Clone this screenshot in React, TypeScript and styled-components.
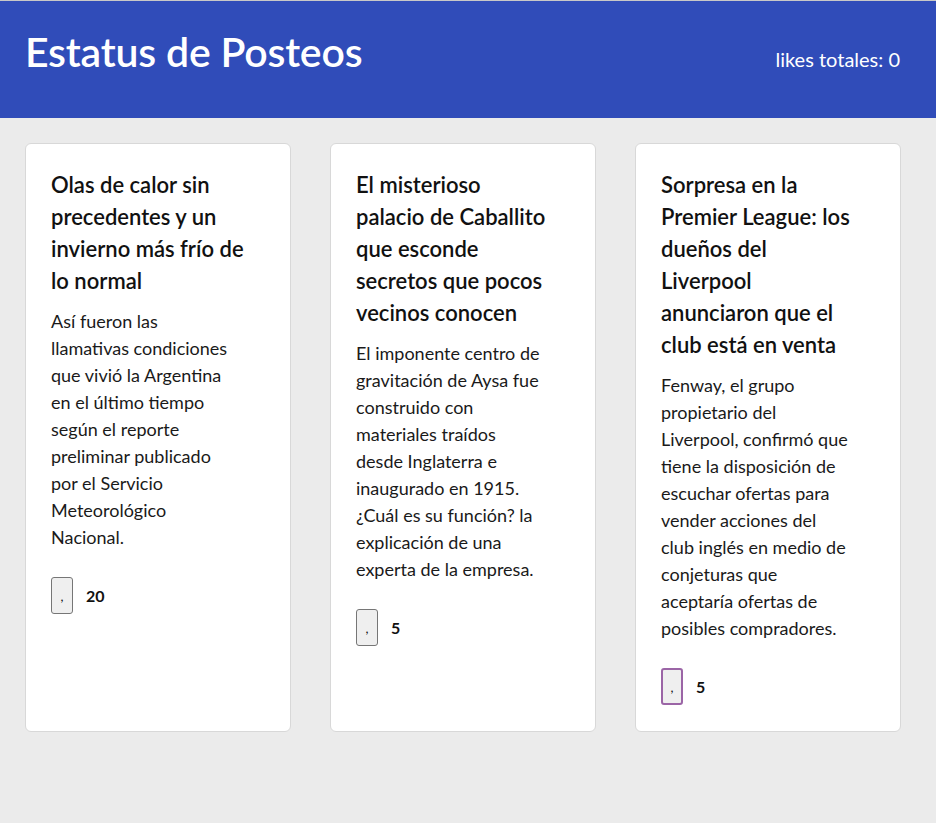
import { FC } from 'react'
import styled, { createGlobalStyle } from 'styled-components'

const GlobalStyle = createGlobalStyle`
  html, body {
    margin: 0;
    padding: 0;
    background: #ebebeb;
    font-family: Lato, 'Noto Sans', sans-serif;
  }
`

type Post = {
  id: number
  title: string[]
  body: string[]
  likes: number
  focused?: boolean
}

const posts: Post[] = [
  {
    id: 1,
    title: ['Olas de calor sin', 'precedentes y un', 'invierno más frío de', 'lo normal'],
    body: [
      'Así fueron las',
      'llamativas condiciones',
      'que vivió la Argentina',
      'en el último tiempo',
      'según el reporte',
      'preliminar publicado',
      'por el Servicio',
      'Meteorológico',
      'Nacional.',
    ],
    likes: 20,
  },
  {
    id: 2,
    title: ['El misterioso', 'palacio de Caballito', 'que esconde', 'secretos que pocos', 'vecinos conocen'],
    body: [
      'El imponente centro de',
      'gravitación de Aysa fue',
      'construido con',
      'materiales traídos',
      'desde Inglaterra e',
      'inaugurado en 1915.',
      '¿Cuál es su función? la',
      'explicación de una',
      'experta de la empresa.',
    ],
    likes: 5,
  },
  {
    id: 3,
    title: [
      'Sorpresa en la',
      'Premier League: los',
      'dueños del',
      'Liverpool',
      'anunciaron que el',
      'club está en venta',
    ],
    body: [
      'Fenway, el grupo',
      'propietario del',
      'Liverpool, confirmó que',
      'tiene la disposición de',
      'escuchar ofertas para',
      'vender acciones del',
      'club inglés en medio de',
      'conjeturas que',
      'aceptaría ofertas de',
      'posibles compradores.',
    ],
    likes: 5,
    focused: true,
  },
]

const Lines: FC<{ lines: string[] }> = ({ lines }) => (
  <>
    {lines.map((line, i) => (
      <span key={i}>
        {line}
        {i < lines.length - 1 && <br />}
      </span>
    ))}
  </>
)

const App = () => {
  const total = 0

  return (
    <>
      <GlobalStyle />
      <Header>
        <Title>Estatus de Posteos</Title>
        <Total>likes totales: {total}</Total>
      </Header>
      <Grid>
        {posts.map((post) => (
          <Card key={post.id}>
            <CardTitle>
              <Lines lines={post.title} />
            </CardTitle>
            <CardBody>
              <Lines lines={post.body} />
            </CardBody>
            <LikeRow>
              <LikeButton $focused={post.focused}>,</LikeButton>
              <LikeCount>{post.likes}</LikeCount>
            </LikeRow>
          </Card>
        ))}
      </Grid>
    </>
  )
}

const Header = styled.header`
  height: 118px;
  box-sizing: border-box;
  border-top: 1px solid #c8c8c8;
  background: #304cb9;
  color: #fff;
  display: flex;
  align-items: center;
  justify-content: space-between;
  padding: 0 36px 16px 25px;
`

const Title = styled.h1`
  margin: 0;
  font-size: 41px;
  font-weight: 600;
  letter-spacing: -0.2px;
`

const Total = styled.span`
  font-size: 20px;
  font-weight: 400;
  color: #fff;
  margin-top: 14px;
`

const Grid = styled.main`
  display: grid;
  grid-template-columns: repeat(3, 266px);
  column-gap: 39px;
  padding: 25px 0 26px 25px;
`

const Card = styled.article`
  background: #fff;
  border: 1px solid #d8d8d8;
  border-radius: 6px;
  padding: 25px 25px 26px;
  box-sizing: border-box;
  display: flex;
  flex-direction: column;
  align-items: flex-start;
`

const CardTitle = styled.h2`
  margin: 0;
  font-size: 22px;
  line-height: 32px;
  font-weight: 600;
  color: #111;
  white-space: nowrap;
`

const CardBody = styled.p`
  margin: 11px 0 0;
  font-size: 18px;
  line-height: 27px;
  color: #1a1a1a;
  white-space: nowrap;
`

const LikeRow = styled.div`
  display: flex;
  align-items: center;
  gap: 13px;
  margin-top: 26px;
`

const LikeButton = styled.button<{ $focused?: boolean }>`
  width: 22px;
  height: 37px;
  padding: 0;
  background: #efefef;
  border: ${({ $focused }) => ($focused ? '2px solid #9b65a6' : '1px solid #767676')};
  border-radius: 3px;
  font-size: 13px;
  color: #111;
  font-family: Lato, sans-serif;
`

const LikeCount = styled.span`
  font-size: 16px;
  font-weight: 700;
  color: #111;
`

export default App
